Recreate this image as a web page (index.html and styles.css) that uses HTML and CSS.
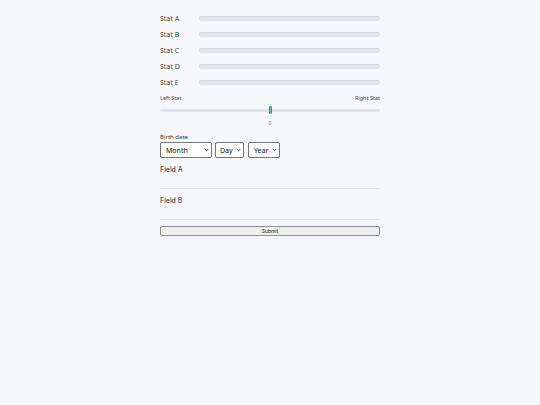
FILE: index.html
```html
<!DOCTYPE html>
<html>
<head>
<meta charset="utf-8">
<link rel="stylesheet" href="styles.css">
</head>
<body>
<div class="wrap">
  <div class="stats">
    <div class="stat"><span class="stat-label">Stat A</span><div class="bar"></div></div>
    <div class="stat"><span class="stat-label">Stat B</span><div class="bar"></div></div>
    <div class="stat"><span class="stat-label">Stat C</span><div class="bar"></div></div>
    <div class="stat"><span class="stat-label">Stat D</span><div class="bar"></div></div>
    <div class="stat"><span class="stat-label">Stat E</span><div class="bar"></div></div>
  </div>
  <div class="range">
    <div class="range-labels"><span>Left Stat</span><span>Right Stat</span></div>
    <div class="track"><div class="thumb"></div></div>
    <div class="range-value">0</div>
  </div>
  <div class="birth">
    <div class="birth-label">Birth date</div>
    <div class="selects">
      <span class="sel-wrap sel-month"><select class="sel"><option>Month</option></select><svg class="chev" viewBox="0 0 6 4" width="5" height="4"><path d="M0.8 0.8 L3 3 L5.2 0.8" fill="none" stroke="#222" stroke-width="1"/></svg></span>
      <span class="sel-wrap sel-day"><select class="sel"><option>Day</option></select><svg class="chev" viewBox="0 0 6 4" width="5" height="4"><path d="M0.8 0.8 L3 3 L5.2 0.8" fill="none" stroke="#222" stroke-width="1"/></svg></span>
      <span class="sel-wrap sel-year"><select class="sel"><option>Year</option></select><svg class="chev" viewBox="0 0 6 4" width="5" height="4"><path d="M0.8 0.8 L3 3 L5.2 0.8" fill="none" stroke="#222" stroke-width="1"/></svg></span>
    </div>
  </div>
  <div class="field field-a">
    <label class="field-label">Field A</label>
    <div class="field-input"></div>
  </div>
  <div class="field field-b">
    <label class="field-label">Field B</label>
    <div class="field-input"></div>
  </div>
  <button class="submit">Submit</button>
</div>
</body>
</html>
```
FILE: styles.css
```css
html, body {
  margin: 0;
  padding: 0;
  background: #f6f7fb;
}
body {
  font-family: "Noto Sans", Lato, sans-serif;
  color: #333;
}
.wrap {
  width: 220px;
  margin: 0 auto;
  padding-top: 11px;
}
.stats {
  display: flex;
  flex-direction: column;
}
.stat {
  display: flex;
  align-items: center;
  height: 16px;
}
.stat-label {
  width: 39px;
  font-size: 7px;
  line-height: 10px;
  color: #4a4a4a;
}
.bar {
  flex: 1;
  height: 5px;
  margin-bottom: 2px;
  border-radius: 3px;
  background: #e3e5ec;
  border-top: 1px solid #d3d6df;
  box-sizing: border-box;
}
.range {
  margin-top: 3px;
}
.range-labels {
  display: flex;
  justify-content: space-between;
  font-size: 5.5px;
  line-height: 8px;
  color: #444;
}
.track {
  position: relative;
  height: 3px;
  margin-top: 7px;
  border-radius: 2px;
  background: #e2e4ea;
}
.thumb {
  position: absolute;
  left: 109px;
  top: -3px;
  width: 3px;
  height: 8px;
  background: #4fbfc6;
  border: 0.5px solid #2c9aa2;
  box-sizing: border-box;
  border-radius: 1px;
}
.range-value {
  text-align: center;
  font-size: 5px;
  line-height: 6px;
  color: #777;
  margin-top: 8px;
}
.birth {
  margin-top: 8px;
}
.birth-label {
  font-size: 6px;
  line-height: 7px;
  color: #333;
}
.selects {
  display: flex;
  gap: 3px;
  margin-top: 1px;
}
.sel-wrap {
  position: relative;
  display: block;
  height: 16px;
}
.sel {
  appearance: none;
  -webkit-appearance: none;
  display: block;
  width: 100%;
  height: 16px;
  box-sizing: border-box;
  font-family: "Noto Sans", Lato, sans-serif;
  font-size: 7px;
  border: 1px solid #767676;
  border-radius: 2px;
  background: #fff;
  color: #111;
  padding: 0 0 0 5px;
  margin: 0;
}
.sel-day .sel {
  padding-left: 4px;
}
.chev {
  position: absolute;
  right: 3px;
  top: 6px;
  pointer-events: none;
}
.sel-month { width: 52px; }
.sel-day { width: 29px; }
.sel-year { width: 32px; margin-left: 1px; }
.field-a {
  margin-top: 7px;
}
.field-b {
  margin-top: 7px;
}
.field-label {
  display: block;
  font-family: Inter, "Liberation Sans", sans-serif;
  font-size: 7px;
  line-height: 9px;
  color: #2a2a2a;
}
.field-input {
  height: 14px;
  border-bottom: 1px solid #e1e3e8;
}
.submit {
  display: block;
  width: 220px;
  height: 10px;
  margin-top: 6px;
  padding: 0;
  font-family: Inter, "Liberation Sans", sans-serif;
  font-size: 5px;
  color: #222;
  background: #efefef;
  border: 1px solid #8f8f8f;
  border-radius: 2px;
  line-height: 8px;
}
```
